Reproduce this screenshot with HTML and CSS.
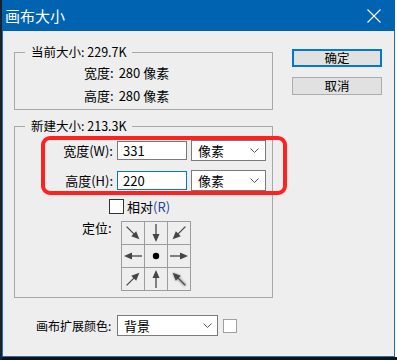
FILE: index.html
```html
<!DOCTYPE html>
<html lang="zh-CN">
<head>
    <meta charset="UTF-8">
    <title>画布大小</title>
    <link rel="stylesheet" href="styles.css">
</head>
<body>
    <div class="window">
        <div class="titlebar">
            <span class="title">画布大小</span>
            <svg class="close" width="14" height="14" viewBox="0 0 14 14">
                <path d="M0.5 0.5L13.5 13.5M13.5 0.5L0.5 13.5" stroke="#fff" stroke-width="1.1" fill="none"/>
            </svg>
        </div>

        <div class="content">
            <div class="main">
                <fieldset class="group current">
                    <legend>当前大小: 229.7K</legend>
                    <div class="info-row"><span class="key">宽度:</span>280 像素</div>
                    <div class="info-row"><span class="key">高度:</span>280 像素</div>
                </fieldset>

                <fieldset class="group new">
                    <legend>新建大小: 213.3K</legend>
                    <div class="size-grid">
                        <span class="size-label">宽度(W):</span>
                        <div class="field">331</div>
                        <div class="select unit">像素
                            <svg class="chev" width="9" height="5" viewBox="0 0 9 5"><path d="M0.5 0.5L4.5 4.5L8.5 0.5" stroke="#555" fill="none"/></svg>
                        </div>

                        <span class="size-label">高度(H):</span>
                        <div class="field focused">220</div>
                        <div class="select unit">像素
                            <svg class="chev" width="9" height="5" viewBox="0 0 9 5"><path d="M0.5 0.5L4.5 4.5L8.5 0.5" stroke="#555" fill="none"/></svg>
                        </div>
                    </div>

                    <div class="check-row">
                        <span class="checkbox"></span>
                        <span>相对<span class="hotkey">(R)</span></span>
                    </div>

                    <div class="anchor-row">
                        <span class="anchor-label">定位:</span>
                        <div class="anchor-grid">
                            <div class="cell"><svg viewBox="0 0 22 22"><g transform="rotate(45 11 11)"><line x1="2" y1="11" x2="14" y2="11"/><polygon points="12,7.5 20,11 12,14.5"/></g></svg></div>
                            <div class="cell"><svg viewBox="0 0 22 22"><g transform="rotate(90 11 11)"><line x1="2" y1="11" x2="14" y2="11"/><polygon points="12,7.5 20,11 12,14.5"/></g></svg></div>
                            <div class="cell"><svg viewBox="0 0 22 22"><g transform="rotate(135 11 11)"><line x1="2" y1="11" x2="14" y2="11"/><polygon points="12,7.5 20,11 12,14.5"/></g></svg></div>
                            <div class="cell"><svg viewBox="0 0 22 22"><g transform="rotate(180 11 11)"><line x1="2" y1="11" x2="14" y2="11"/><polygon points="12,7.5 20,11 12,14.5"/></g></svg></div>
                            <div class="cell"><svg viewBox="0 0 22 22"><circle cx="11" cy="11" r="3.2" fill="#000"/></svg></div>
                            <div class="cell"><svg viewBox="0 0 22 22"><g><line x1="2" y1="11" x2="14" y2="11"/><polygon points="12,7.5 20,11 12,14.5"/></g></svg></div>
                            <div class="cell"><svg viewBox="0 0 22 22"><g transform="rotate(-45 11 11)"><line x1="2" y1="11" x2="14" y2="11"/><polygon points="12,7.5 20,11 12,14.5"/></g></svg></div>
                            <div class="cell"><svg viewBox="0 0 22 22"><g transform="rotate(-90 11 11)"><line x1="2" y1="11" x2="14" y2="11"/><polygon points="12,7.5 20,11 12,14.5"/></g></svg></div>
                            <div class="cell"><svg viewBox="0 0 22 22">
                                <defs><filter id="soft" x="-50%" y="-50%" width="200%" height="200%"><feGaussianBlur stdDeviation="1"/></filter></defs>
                                <g transform="rotate(-135 11 11)" class="shadow" filter="url(#soft)"><line x1="2" y1="11" x2="14" y2="11"/><polygon points="12,7.5 20,11 12,14.5"/></g>
                                <g transform="rotate(-135 11 11)"><line x1="2" y1="11" x2="14" y2="11"/><polygon points="12,7.5 20,11 12,14.5"/></g>
                            </svg></div>
                        </div>
                    </div>
                </fieldset>

                <div class="ext-row">
                    <span class="ext-label">画布扩展颜色:</span>
                    <div class="select ext">背景
                        <svg class="chev" width="9" height="5" viewBox="0 0 9 5"><path d="M0.5 0.5L4.5 4.5L8.5 0.5" stroke="#555" fill="none"/></svg>
                    </div>
                    <span class="swatch"></span>
                </div>
            </div>

            <div class="buttons">
                <button class="btn default">确定</button>
                <button class="btn">取消</button>
            </div>
        </div>

        <div class="highlight"></div>
    </div>
    <div class="taskbar"></div>
</body>
</html>
```

FILE: styles.css
```css
html {
    background: #fff;
}
body {
    margin: 0;
    width: 395px;
    border-left: 2px solid #18222c;
    font-family: "Noto Sans CJK SC", "Noto Sans", sans-serif;
    font-size: 12px;
    line-height: 14px;
    color: #000;
}
.window {
    position: relative;
    box-sizing: border-box;
    width: 393px;
    height: 357px;
    background: #eeeeee;
    border-left: 1px solid #1f6fc0;
    border-right: 1px solid #1f6fc0;
    border-bottom: 1px solid #1f6fc0;
    display: flex;
    flex-direction: column;
}
.titlebar {
    height: 31px;
    background: #0063b1;
    display: flex;
    align-items: center;
    justify-content: space-between;
    padding: 0 14px 0 3px;
    margin-left: -1px;
    margin-right: -1px;
}
.title {
    color: #fff;
    font-size: 15px;
    line-height: 18px;
}
.close {
    display: block;
    margin-top: 1px;
}
.content {
    display: flex;
    padding-left: 11px;
}
.main {
    width: 259px;
}
.group {
    margin: 0;
    padding: 0;
    border: 1px solid #a8a8a8;
    min-width: 0;
}
.group legend {
    margin-left: 10px;
    padding: 0 5px 0 6px;
    font-size: 12.5px;
    line-height: 14px;
}
.current {
    margin-top: 14px;
    padding: 2px 0 2px 0;
}
.info-row {
    height: 23px;
    line-height: 23px;
    padding-left: 69px;
    font-size: 13px;
}
.key {
    margin-right: 5px;
}
.new {
    margin-top: 9px;
    padding: 7px 0 6px 0;
}
.size-grid {
    display: grid;
    grid-template-columns: 98px 70px 75px;
    grid-auto-rows: 21px;
    column-gap: 4px;
    row-gap: 9px;
    align-items: center;
    font-size: 13px;
}
.size-label {
    text-align: right;
}
.field {
    box-sizing: border-box;
    height: 19px;
    line-height: 17px;
    padding-left: 5px;
    background: #fff;
    border: 1px solid #7a7a7a;
}
.field.focused {
    border-color: #0078d7;
}
.select {
    box-sizing: border-box;
    height: 21px;
    padding: 0 6px 0 6px;
    background: #fff;
    border: 1px solid #7a7a7a;
    display: flex;
    align-items: center;
    justify-content: space-between;
}
.chev {
    display: block;
}
.check-row {
    margin-top: 8px;
    padding-left: 94px;
    display: flex;
    align-items: center;
    height: 15px;
    font-size: 13px;
}
.checkbox {
    box-sizing: border-box;
    width: 15px;
    height: 15px;
    background: #fff;
    border: 1px solid #333;
    margin-right: 3px;
}
.hotkey {
    color: #2a3f9a;
}
.anchor-row {
    margin-top: 7px;
    padding-left: 67px;
    display: flex;
    align-items: flex-start;
}
.anchor-label {
    width: 39px;
    line-height: 14px;
    font-size: 13px;
}
.anchor-grid {
    display: grid;
    grid-template-columns: repeat(3, 22px);
    grid-template-rows: repeat(3, 22px);
    gap: 1px;
    padding: 1px;
    background: #9c9c9c;
}
.cell {
    background: #eeeeee;
}
.cell svg {
    display: block;
    width: 22px;
    height: 22px;
}
.cell line {
    stroke: #454545;
    stroke-width: 1.3;
}
.cell polygon {
    fill: #454545;
}
.cell .shadow line {
    stroke: #9a9a9a;
    stroke-width: 2.5;
}
.cell .shadow polygon {
    fill: #9a9a9a;
}
.ext-row {
    margin-top: 17px;
    padding-left: 22px;
    display: flex;
    align-items: center;
    height: 21px;
}
.ext-label {
    width: 81px;
    font-size: 12px;
}
.select.ext {
    width: 101px;
    padding-right: 5px;
    font-size: 13px;
}
.swatch {
    box-sizing: border-box;
    width: 14px;
    height: 14px;
    margin-left: 5px;
    background: #fff;
    border: 1px solid #a0a0a0;
}
.buttons {
    margin-left: 19px;
    margin-top: 18px;
    display: flex;
    flex-direction: column;
    gap: 10px;
}
.btn {
    box-sizing: border-box;
    width: 90px;
    height: 18px;
    padding: 0;
    font-family: inherit;
    font-size: 12.5px;
    line-height: 14px;
    color: #000;
    background: #e1e1e1;
    border: 1px solid #adadad;
}
.btn.default {
    border: 2px solid #0078d7;
}
.highlight {
    position: absolute;
    left: 38px;
    top: 136px;
    box-sizing: border-box;
    width: 246px;
    height: 59px;
    border: 4px solid #ff2020;
    border-radius: 9px;
}
.taskbar {
    height: 3px;
    background: #111;
}
```
